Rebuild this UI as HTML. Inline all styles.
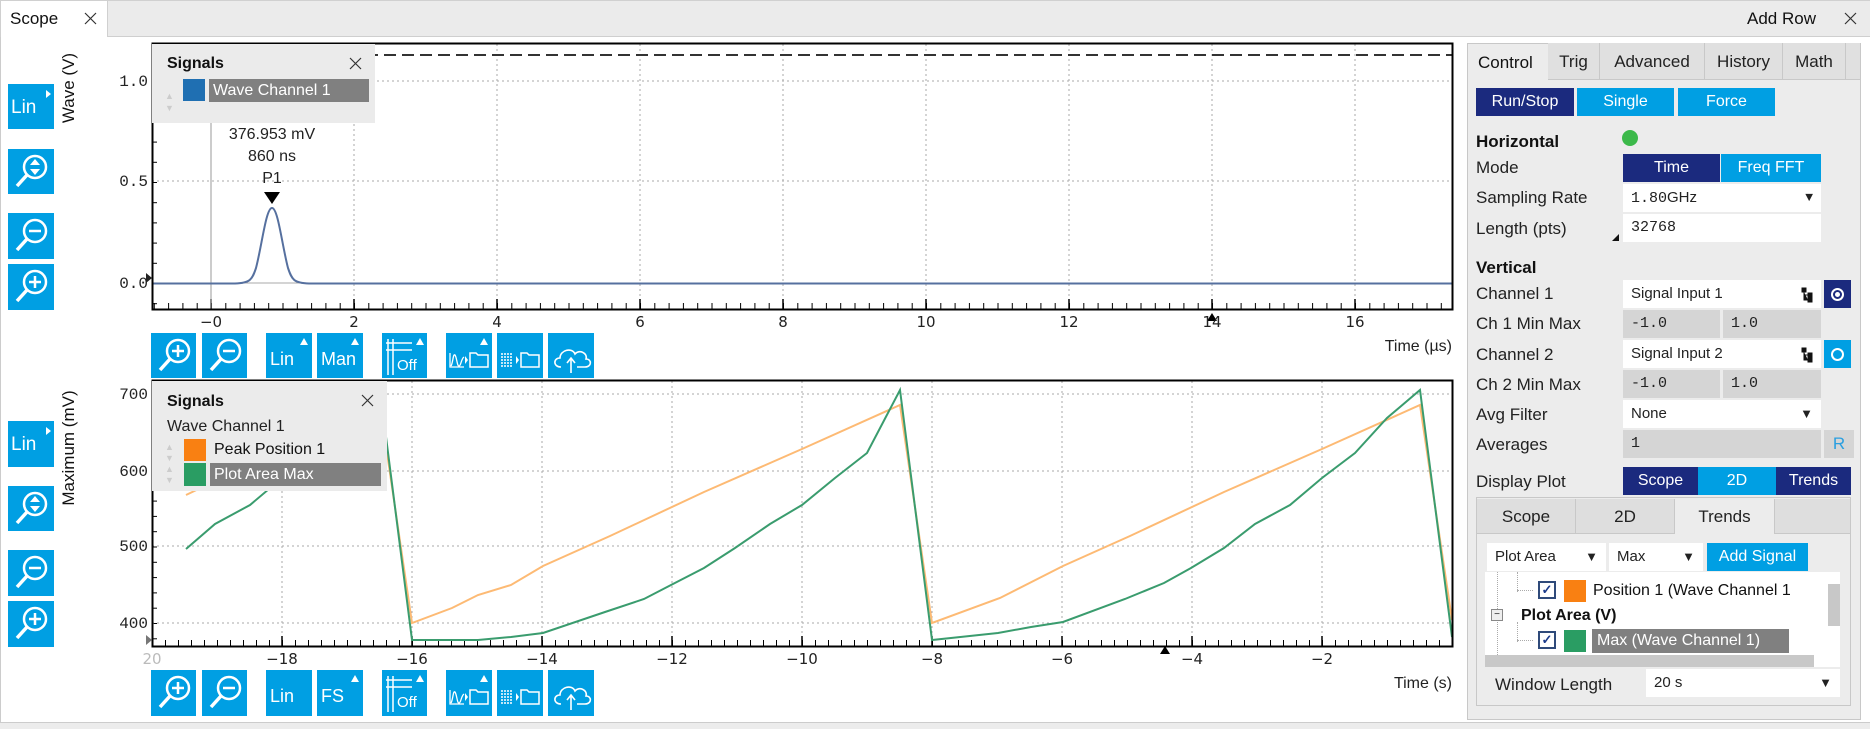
<!DOCTYPE html>
<html><head><meta charset="utf-8"><style>
*{margin:0;padding:0;box-sizing:border-box}
body{width:1870px;height:729px;position:relative;background:#fff;font-family:"Liberation Sans",sans-serif;overflow:hidden;color:#222}
.a{position:absolute}
.b{position:absolute;background:#009fe3;width:46px;height:46px}
.b svg{position:absolute;left:0;top:0}
.t{position:absolute;font-size:16px;white-space:nowrap}
.f{position:absolute;background:#fff;font-size:15px;padding-left:8px;line-height:28px;height:28px;white-space:nowrap}
.g{background:#d5d5d5}
.m{font-family:"Liberation Mono",monospace}
.nv{background:#1b2a7e;color:#fff;text-align:center;font-size:16px;line-height:28px;position:absolute;height:28px}
.lb{background:#009fe3;color:#fff;text-align:center;font-size:16px;line-height:28px;position:absolute;height:28px}
.dd{position:absolute;right:8px;top:0;font-size:13px}
.tab{position:absolute;top:43px;height:37px;line-height:37px;text-align:center;font-size:17px;background:#e0e0e0;border-right:1px solid #c8c8c8;border-bottom:1px solid #c8c8c8}
.x{position:absolute}
.tr{position:absolute;right:8px;top:7px}
</style></head><body>
<svg width="0" height="0" class="a"><defs>
<g id="xx"><path d="M1 1 L12 12 M12 1 L1 12" stroke="#333" stroke-width="1.2" fill="none"/></g>
<g id="tree"><path d="M1 1h4v4h-4z M7 6h4v4h-4z M7 11h4v4h-4z M3 5v8h4 M3 8h4" fill="#111" stroke="#111" stroke-width="1"/></g>
<g id="mag"><circle cx="27" cy="18" r="11" stroke="#fff" stroke-width="2.5" fill="none"/><line x1="19" y1="26" x2="9" y2="37" stroke="#fff" stroke-width="3.5"/></g>
<g id="zin"><use href="#mag"/><line x1="21" y1="18" x2="33" y2="18" stroke="#fff" stroke-width="2.5"/><line x1="27" y1="12" x2="27" y2="24" stroke="#fff" stroke-width="2.5"/></g>
<g id="zout"><use href="#mag"/><line x1="21" y1="18" x2="33" y2="18" stroke="#fff" stroke-width="2.5"/></g>
<g id="zfit"><use href="#mag"/><path d="M22 16 L27 10 L32 16Z M22 20 L27 26 L32 20Z" fill="#fff"/></g>
<g id="tri"><path d="M34 12 L38 5 L42 12Z" fill="#fff"/></g>
<g id="off"><path d="M6 6V42 M11 6V42 M4 10H30 M4 17H30" stroke="#fff" stroke-width="1.5" fill="none"/><text x="15" y="37" fill="#fff" font-size="15" font-family="Liberation Sans">Off</text><use href="#tri"/></g>
<g id="fold"><path d="M24 20 H30 L32 22 H42 V34 H24Z" stroke="#fff" stroke-width="1.5" fill="none"/><path d="M19 23 L22 27 L19 31Z" fill="#fff"/></g>
<g id="wav"><use href="#fold"/><path d="M4 20 V34 H18 M5 33 C7 30 7 20 9 22 C11 25 11 33 13 33 C15 33 15 26 18 24" stroke="#fff" stroke-width="1.3" fill="none"/><use href="#tri"/></g>
<g id="tab"><use href="#fold"/><path d="M4 21H16 M4 24H16 M4 27H16 M4 30H16 M4 33H16" stroke="#fff" stroke-width="1.5" stroke-dasharray="2 1" fill="none"/></g>
<g id="cld"><path d="M13 34 C5 34 5 25 12 25 C12 17 24 14 27 21 C31 16 40 20 38 26 C44 26 44 34 37 34 H29" stroke="#fff" stroke-width="1.6" fill="none"/><path d="M23 40V26 M19 30 L23 25 L27 30" stroke="#fff" stroke-width="1.6" fill="none"/></g>
</defs></svg>
<!-- tab bar -->
<div class="a" style="left:0;top:0;width:1870px;height:37px;background:#ebebeb;border-bottom:1px solid #cfcfcf;border-top:1px solid #d0d0d0"></div>
<div class="a" style="left:0;top:0;width:108px;height:37px;background:#fff;border:1px solid #d0d0d0;border-bottom:none"></div>
<div class="t" style="left:10px;top:9px;font-size:17px;color:#111">Scope</div>
<svg class="x" style="left:84px;top:12px" width="13" height="13"><use href="#xx"/></svg>
<div class="t" style="left:1747px;top:9px;font-size:17px;color:#111">Add Row</div>
<svg class="x" style="left:1844px;top:12px" width="13" height="13"><use href="#xx"/></svg>
<div class="a" style="left:0;top:37px;width:1px;height:692px;background:#ccc"></div>
<div class="a" style="left:0;top:722px;width:1870px;height:7px;background:#ececec;border-top:1px solid #ccc"></div>

<div class="b" style="left:8px;top:84px;height:45px"><span class="t" style="left:3px;top:13px;color:#fff;font-size:19px">Lin</span><svg width="46" height="46"><path d="M38 6 L43 10 L38 14Z" fill="#fff"/></svg></div>
<div class="b" style="left:8px;top:149px;height:45px"><svg width="46" height="46"><use href="#zfit"/></svg></div>
<div class="b" style="left:8px;top:213px"><svg width="46" height="46"><use href="#zout"/></svg></div>
<div class="b" style="left:8px;top:264px"><svg width="46" height="46"><use href="#zin"/></svg></div>

<div class="b" style="left:8px;top:421px"><span class="t" style="left:3px;top:13px;color:#fff;font-size:19px">Lin</span><svg width="46" height="46"><path d="M38 6 L43 10 L38 14Z" fill="#fff"/></svg></div>
<div class="b" style="left:8px;top:486px;height:45px"><svg width="46" height="46"><use href="#zfit"/></svg></div>
<div class="b" style="left:8px;top:550px"><svg width="46" height="46"><use href="#zout"/></svg></div>
<div class="b" style="left:8px;top:601px"><svg width="46" height="46"><use href="#zin"/></svg></div>

<div class="t" style="left:29px;top:78px;width:80px;text-align:center;transform:rotate(-90deg);font-size:17px;color:#111">Wave (V)</div>
<div class="t" style="left:9px;top:438px;width:120px;text-align:center;transform:rotate(-90deg);font-size:17px;color:#111">Maximum (mV)</div>

<svg class="a" style="left:0;top:0" width="1870" height="729">
<defs>
<pattern id="tx1" x="211" y="0" width="14.3" height="800" patternUnits="userSpaceOnUse"><line x1="0.5" y1="0" x2="0.5" y2="800" stroke="#000"/></pattern>
<pattern id="ty1" x="0" y="283" width="10" height="20.2" patternUnits="userSpaceOnUse"><line x1="0" y1="0.5" x2="10" y2="0.5" stroke="#000"/></pattern>
<pattern id="tx2" x="152" y="0" width="13" height="800" patternUnits="userSpaceOnUse"><line x1="0.5" y1="0" x2="0.5" y2="800" stroke="#000"/></pattern>
<pattern id="ty2" x="0" y="623" width="10" height="15.3" patternUnits="userSpaceOnUse"><line x1="0" y1="0.5" x2="10" y2="0.5" stroke="#000"/></pattern>
</defs>
<rect x="152" y="303" width="1300" height="6" fill="url(#tx1)"/>
<rect x="152" y="44" width="5" height="265" fill="url(#ty1)"/>
<g stroke="#aaa" stroke-dasharray="2 3">
<line x1="354" y1="44" x2="354" y2="309"/><line x1="497" y1="44" x2="497" y2="309"/><line x1="640" y1="44" x2="640" y2="309"/><line x1="783" y1="44" x2="783" y2="309"/><line x1="926" y1="44" x2="926" y2="309"/><line x1="1069" y1="44" x2="1069" y2="309"/><line x1="1212" y1="44" x2="1212" y2="309"/><line x1="1355" y1="44" x2="1355" y2="309"/>
<line x1="152" y1="81" x2="1452" y2="81"/><line x1="152" y1="181" x2="1452" y2="181"/>
</g>
<g stroke="#000" stroke-width="1.5"><line x1="354" y1="299" x2="354" y2="309"/><line x1="497" y1="299" x2="497" y2="309"/><line x1="640" y1="299" x2="640" y2="309"/><line x1="783" y1="299" x2="783" y2="309"/><line x1="926" y1="299" x2="926" y2="309"/><line x1="1069" y1="299" x2="1069" y2="309"/><line x1="1212" y1="299" x2="1212" y2="309"/><line x1="1355" y1="299" x2="1355" y2="309"/><line x1="211" y1="299" x2="211" y2="309"/></g>
<line x1="211" y1="44" x2="211" y2="309" stroke="#999"/>
<line x1="152" y1="283" x2="1452" y2="283" stroke="#aaa"/>
<line x1="330" y1="55" x2="1452" y2="55" stroke="#333" stroke-width="2" stroke-dasharray="12 6"/>
<path d="M152 283.5 H235 C250 283 252 280 256 268 C262 245 266 208 272 208 C278 208 282 245 288 268 C292 280 294 283 309 283.5 H1452" stroke="#56709f" stroke-width="2" fill="none"/>
<rect x="152.5" y="43.5" width="1300" height="266" fill="none" stroke="#000" stroke-width="2"/>
<path d="M264 192 H280 L272 204Z" fill="#000"/>
<path d="M1207 321 L1212 313 L1217 321Z" fill="#000"/>
<path d="M146 273 L152 278 L146 283Z" fill="#222"/>
<g font-family="DejaVu Sans,sans-serif" font-size="15" fill="#222" text-anchor="middle">
<text x="211" y="327">−0</text><text x="354" y="327">2</text><text x="497" y="327">4</text><text x="640" y="327">6</text><text x="783" y="327">8</text><text x="926" y="327">10</text><text x="1069" y="327">12</text><text x="1212" y="327">14</text><text x="1355" y="327">16</text>
</g>
<g font-family="Liberation Mono,monospace" font-size="16" fill="#222" text-anchor="end">
<text x="148" y="86">1.0</text><text x="148" y="186">0.5</text><text x="148" y="288">0.0</text>
</g>
<text x="1452" y="351" text-anchor="end" font-family="Liberation Sans" font-size="16" fill="#222">Time (µs)</text>
<text x="272" y="139" text-anchor="middle" font-family="Liberation Sans" font-size="16" fill="#222">376.953 mV</text>
<text x="272" y="161" text-anchor="middle" font-family="Liberation Sans" font-size="16" fill="#222">860 ns</text>
<text x="272" y="183" text-anchor="middle" font-family="Liberation Sans" font-size="16" fill="#222">P1</text>

<rect x="152" y="640" width="1300" height="6" fill="url(#tx2)"/>
<rect x="152" y="381" width="5" height="265" fill="url(#ty2)"/>
<g stroke="#aaa" stroke-dasharray="2 3">
<line x1="282" y1="381" x2="282" y2="646"/><line x1="412" y1="381" x2="412" y2="646"/><line x1="542" y1="381" x2="542" y2="646"/><line x1="672" y1="381" x2="672" y2="646"/><line x1="802" y1="381" x2="802" y2="646"/><line x1="932" y1="381" x2="932" y2="646"/><line x1="1062" y1="381" x2="1062" y2="646"/><line x1="1192" y1="381" x2="1192" y2="646"/><line x1="1322" y1="381" x2="1322" y2="646"/>
<line x1="152" y1="394" x2="1452" y2="394"/><line x1="152" y1="471" x2="1452" y2="471"/><line x1="152" y1="546" x2="1452" y2="546"/><line x1="152" y1="623" x2="1452" y2="623"/>
</g>
<g stroke="#000" stroke-width="1.5"><line x1="282" y1="636" x2="282" y2="646"/><line x1="412" y1="636" x2="412" y2="646"/><line x1="542" y1="636" x2="542" y2="646"/><line x1="672" y1="636" x2="672" y2="646"/><line x1="802" y1="636" x2="802" y2="646"/><line x1="932" y1="636" x2="932" y2="646"/><line x1="1062" y1="636" x2="1062" y2="646"/><line x1="1192" y1="636" x2="1192" y2="646"/><line x1="1322" y1="636" x2="1322" y2="646"/></g>
<polyline fill="none" stroke="#fdba74" stroke-width="2" points="186,495 282,449 380,405 412,623 452,608 478,595 511,585 543,566 610,536 704,492 802,449 900,405 932,623 1000,598 1063,566 1130,536 1224,492 1322,449 1420,405 1452,620"/>
<polyline fill="none" stroke="#3a9c6e" stroke-width="2" points="186,549 215,524 250,505 282,478 315,453 347,418 380,390 412,640 478,640 511,637 543,633 605,612 644,599 671,585 704,568 735,548 770,524 802,505 835,478 867,453 900,390 932,640 998,633 1031,627 1063,622 1125,599 1164,583 1191,568 1224,548 1255,524 1290,505 1322,478 1355,453 1387,418 1420,390 1452,637"/>
<rect x="152.5" y="380.5" width="1300" height="266" fill="none" stroke="#000" stroke-width="2"/>
<path d="M1160 654 L1165 646 L1170 654Z" fill="#000"/>
<path d="M146 635 L152 640 L146 645Z" fill="#777"/>
<g font-family="DejaVu Sans,sans-serif" font-size="15" fill="#222" text-anchor="middle">
<text x="152" y="664" fill="#bbb">20</text><text x="282" y="664">−18</text><text x="412" y="664">−16</text><text x="542" y="664">−14</text><text x="672" y="664">−12</text><text x="802" y="664">−10</text><text x="932" y="664">−8</text><text x="1062" y="664">−6</text><text x="1192" y="664">−4</text><text x="1322" y="664">−2</text>
</g>
<g font-family="Liberation Mono,monospace" font-size="16" fill="#222" text-anchor="end">
<text x="148" y="399">700</text><text x="148" y="476">600</text><text x="148" y="551">500</text><text x="148" y="628">400</text>
</g>
<text x="1452" y="688" text-anchor="end" font-family="Liberation Sans" font-size="16" fill="#222">Time (s)</text>
</svg>

<div class="a" style="left:152px;top:44px;width:223px;height:79px;background:#ebebeb"></div>
<div class="t" style="left:167px;top:55px;font-weight:bold;color:#111">Signals</div>
<svg class="x" style="left:349px;top:57px" width="13" height="13"><use href="#xx"/></svg>
<div class="a" style="left:165px;top:90px;color:#ccc;font-size:9px;line-height:12px">▲<br>▼</div>
<div class="a" style="left:183px;top:79px;width:22px;height:22px;background:#1f6fb2"></div>
<div class="a" style="left:209px;top:79px;width:160px;height:23px;background:#808080;color:#fff;font-size:16px;line-height:23px;padding-left:4px">Wave Channel 1</div>

<div class="a" style="left:152px;top:381px;width:235px;height:110px;background:#ebebeb"></div>
<div class="t" style="left:167px;top:393px;font-weight:bold;color:#111">Signals</div>
<svg class="x" style="left:361px;top:394px" width="13" height="13"><use href="#xx"/></svg>
<div class="t" style="left:167px;top:418px;color:#222">Wave Channel 1</div>
<div class="a" style="left:165px;top:442px;color:#ccc;font-size:9px;line-height:11px">▲<br>▼<br>▲<br>▼</div>
<div class="a" style="left:184px;top:439px;width:22px;height:22px;background:#f98012"></div>
<div class="t" style="left:214px;top:441px;color:#111">Peak Position 1</div>
<div class="a" style="left:184px;top:463px;width:22px;height:23px;background:#2a9d63"></div>
<div class="a" style="left:210px;top:463px;width:171px;height:23px;background:#808080;color:#fff;font-size:16px;line-height:23px;padding-left:4px">Plot Area Max</div>

<div class="b" style="left:151px;top:333px;width:45px;height:45px"><svg width="46" height="46"><use href="#zin"/></svg></div>
<div class="b" style="left:202px;top:333px;width:45px;height:45px"><svg width="46" height="46"><use href="#zout"/></svg></div>
<div class="b" style="left:266px;top:333px;width:46px;height:45px"><span class="t" style="left:4px;top:16px;color:#fff;font-size:18px">Lin</span><svg width="46" height="46"><use href="#tri"/></svg></div>
<div class="b" style="left:317px;top:333px;width:46px;height:45px"><span class="t" style="left:4px;top:16px;color:#fff;font-size:18px">Man</span><svg width="46" height="46"><use href="#tri"/></svg></div>
<div class="b" style="left:382px;top:333px;width:45px;height:45px"><svg width="46" height="46"><use href="#off"/></svg></div>
<div class="b" style="left:446px;top:333px;width:46px;height:45px"><svg width="46" height="46"><use href="#wav"/></svg></div>
<div class="b" style="left:497px;top:333px;width:46px;height:45px"><svg width="46" height="46"><use href="#tab"/></svg></div>
<div class="b" style="left:548px;top:333px;width:46px;height:45px"><svg width="46" height="46"><use href="#cld"/></svg></div>

<div class="b" style="left:151px;top:670px;width:45px;height:46px"><svg width="46" height="46"><use href="#zin"/></svg></div>
<div class="b" style="left:202px;top:670px;width:45px;height:46px"><svg width="46" height="46"><use href="#zout"/></svg></div>
<div class="b" style="left:266px;top:670px;width:46px;height:46px"><span class="t" style="left:4px;top:16px;color:#fff;font-size:18px">Lin</span></div>
<div class="b" style="left:317px;top:670px;width:46px;height:46px"><span class="t" style="left:4px;top:16px;color:#fff;font-size:18px">FS</span><svg width="46" height="46"><use href="#tri"/></svg></div>
<div class="b" style="left:382px;top:670px;width:45px;height:46px"><svg width="46" height="46"><use href="#off"/></svg></div>
<div class="b" style="left:446px;top:670px;width:46px;height:46px"><svg width="46" height="46"><use href="#wav"/></svg></div>
<div class="b" style="left:497px;top:670px;width:46px;height:46px"><svg width="46" height="46"><use href="#tab"/></svg></div>
<div class="b" style="left:548px;top:670px;width:46px;height:46px"><svg width="46" height="46"><use href="#cld"/></svg></div>

<div class="a" style="left:1467px;top:43px;width:394px;height:677px;background:#ececec;border:1px solid #c8c8c8"></div>
<div class="tab" style="left:1548px;width:52px">Trig</div>
<div class="tab" style="left:1600px;width:105px">Advanced</div>
<div class="tab" style="left:1705px;width:78px">History</div>
<div class="tab" style="left:1783px;width:63px">Math</div>
<div class="tab" style="left:1846px;width:14px;border-right:none"></div>
<div class="t" style="left:1478px;top:53px;font-size:17px;color:#111">Control</div>

<div class="nv" style="left:1476px;top:88px;width:98px">Run/Stop</div>
<div class="lb" style="left:1577px;top:88px;width:97px">Single</div>
<div class="lb" style="left:1678px;top:88px;width:97px">Force</div>

<div class="t" style="left:1476px;top:132px;font-weight:bold;font-size:17px;color:#111">Horizontal</div>
<div class="a" style="left:1622px;top:130px;width:16px;height:16px;border-radius:50%;background:#3cb94a"></div>
<div class="t" style="left:1476px;top:158px;font-size:17px">Mode</div>
<div class="nv" style="left:1623px;top:154px;width:97px">Time</div>
<div class="lb" style="left:1721px;top:154px;width:100px">Freq FFT</div>
<div class="t" style="left:1476px;top:188px;font-size:17px">Sampling Rate</div>
<div class="f m" style="left:1623px;top:184px;width:198px">1.80<span style="font-family:Liberation Sans">GHz</span><span class="dd">▼</span></div>
<div class="t" style="left:1476px;top:219px;font-size:17px">Length (pts)</div>
<div class="a" style="left:1612px;top:234px;width:0;height:0;border-left:7px solid transparent;border-bottom:7px solid #111"></div>
<div class="f m" style="left:1623px;top:214px;width:198px">32768</div>

<div class="t" style="left:1476px;top:258px;font-weight:bold;font-size:17px;color:#111">Vertical</div>
<div class="t" style="left:1476px;top:284px;font-size:17px">Channel 1</div>
<div class="f" style="left:1623px;top:280px;width:198px">Signal Input 1<svg class="tr" width="12" height="16"><use href="#tree"/></svg></div>
<div class="a" style="left:1824px;top:280px;width:27px;height:28px;background:#1b2a7e"><div class="a" style="left:7px;top:8px;width:13px;height:13px;border:2px solid #fff;border-radius:50%"><div class="a" style="left:2px;top:2px;width:5px;height:5px;background:#fff;border-radius:50%"></div></div></div>
<div class="t" style="left:1476px;top:314px;font-size:17px">Ch 1 Min Max</div>
<div class="f g m" style="left:1623px;top:310px;width:97px">-1.0</div>
<div class="f g m" style="left:1723px;top:310px;width:98px">1.0</div>
<div class="t" style="left:1476px;top:345px;font-size:17px">Channel 2</div>
<div class="f" style="left:1623px;top:340px;width:198px">Signal Input 2<svg class="tr" width="12" height="16"><use href="#tree"/></svg></div>
<div class="a" style="left:1824px;top:340px;width:27px;height:28px;background:#009fe3"><div class="a" style="left:7px;top:8px;width:13px;height:13px;border:2px solid #fff;border-radius:50%"></div></div>
<div class="t" style="left:1476px;top:375px;font-size:17px">Ch 2 Min Max</div>
<div class="f g m" style="left:1623px;top:370px;width:97px">-1.0</div>
<div class="f g m" style="left:1723px;top:370px;width:98px">1.0</div>
<div class="t" style="left:1476px;top:405px;font-size:17px">Avg Filter</div>
<div class="f" style="left:1623px;top:400px;width:198px">None<span class="dd">▼</span></div>
<div class="t" style="left:1476px;top:435px;font-size:17px">Averages</div>
<div class="f g m" style="left:1623px;top:430px;width:198px">1</div>
<div class="a" style="left:1824px;top:430px;width:30px;height:28px;background:#d5d5d5;color:#2a9fe0;font-size:17px;line-height:28px;text-align:center">R</div>
<div class="t" style="left:1476px;top:472px;font-size:17px">Display Plot</div>
<div class="nv" style="left:1623px;top:467px;width:75px">Scope</div>
<div class="lb" style="left:1698px;top:467px;width:78px">2D</div>
<div class="nv" style="left:1776px;top:467px;width:75px">Trends</div>

<div class="a" style="left:1476px;top:497px;width:375px;height:209px;border:1px solid #c8c8c8;background:#ececec"></div>
<div class="a" style="left:1477px;top:499px;width:99px;height:35px;background:#dedede;border-right:1px solid #c8c8c8;border-bottom:1px solid #c8c8c8;text-align:center;line-height:35px;font-size:17px">Scope</div>
<div class="a" style="left:1576px;top:499px;width:99px;height:35px;background:#dedede;border-right:1px solid #c8c8c8;border-bottom:1px solid #c8c8c8;text-align:center;line-height:35px;font-size:17px">2D</div>
<div class="a" style="left:1675px;top:499px;width:99px;height:35px;text-align:center;line-height:35px;font-size:17px">Trends</div>
<div class="a" style="left:1774px;top:499px;width:76px;height:35px;background:#dedede;border-left:1px solid #c8c8c8;border-bottom:1px solid #c8c8c8"></div>

<div class="f" style="left:1487px;top:543px;width:119px">Plot Area<span class="dd">▼</span></div>
<div class="f" style="left:1609px;top:543px;width:94px">Max<span class="dd">▼</span></div>
<div class="lb" style="left:1707px;top:543px;width:101px;font-size:16px">Add Signal</div>
<div class="a" style="left:1485px;top:572px;width:355px;height:95px;background:#fff;overflow:hidden">
 <div class="a" style="left:12px;top:0;height:95px;border-left:1px dotted #aaa"></div>
 <div class="a" style="left:32px;top:0;height:20px;border-left:1px dotted #aaa"></div>
 <div class="a" style="left:32px;top:18px;width:16px;border-top:1px dotted #aaa"></div>
 <div class="a" style="left:53px;top:9px;width:18px;height:18px;border:2px solid #2f4a7a;color:#1b3a8a;font-size:13px;line-height:14px;text-align:center;font-weight:bold">✓</div>
 <div class="a" style="left:79px;top:8px;width:22px;height:22px;background:#f98012"></div>
 <div class="t" style="left:108px;top:10px;color:#111">Position 1 (Wave Channel 1</div>
 <div class="a" style="left:6px;top:37px;width:12px;height:12px;border:1px solid #888;background:#eee;font-size:10px;line-height:9px;text-align:center">−</div>
 <div class="t" style="left:36px;top:35px;font-weight:bold;color:#111">Plot Area (V)</div>
 <div class="a" style="left:32px;top:50px;height:20px;border-left:1px dotted #aaa"></div>
 <div class="a" style="left:32px;top:68px;width:16px;border-top:1px dotted #aaa"></div>
 <div class="a" style="left:53px;top:59px;width:18px;height:18px;border:2px solid #2f4a7a;color:#1b3a8a;font-size:13px;line-height:14px;text-align:center;font-weight:bold">✓</div>
 <div class="a" style="left:79px;top:58px;width:22px;height:22px;background:#2a9d63"></div>
 <div class="a" style="left:107px;top:57px;width:197px;height:24px;background:#808080;color:#fff;font-size:16px;line-height:24px;padding-left:5px">Max (Wave Channel 1)</div>
 <div class="a" style="left:343px;top:12px;width:12px;height:42px;background:#c8c8c8"></div>
 <div class="a" style="left:0;top:83px;width:329px;height:12px;background:#c8c8c8"></div>
</div>
<div class="t" style="left:1495px;top:675px;font-size:17px">Window Length</div>
<div class="f" style="left:1646px;top:669px;width:194px">20 s<span class="dd">▼</span></div>
</body></html>
